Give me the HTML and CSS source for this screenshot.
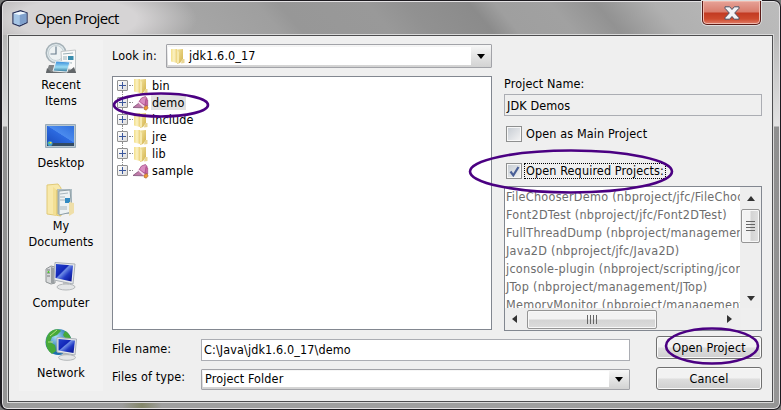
FILE: index.html
```html
<!DOCTYPE html>
<html lang="en">
<head>
<meta charset="utf-8">
<title>Open Project</title>
<link rel="stylesheet" href="styles.css">
</head>
<body>
<svg class="defs" width="0" height="0" aria-hidden="true">
  <defs>
    <linearGradient id="fold" x1="0" x2="1" y1="0" y2="0"><stop offset="0" stop-color="#f3df8a"/><stop offset=".5" stop-color="#fbf2c4"/><stop offset="1" stop-color="#ecd27a"/></linearGradient>
    <linearGradient id="flap" x1="0" x2="1" y1="0" y2="1"><stop offset="0" stop-color="#f4e5a0"/><stop offset="1" stop-color="#d2b14a"/></linearGradient>
    <linearGradient id="scr" x1="0" x2="1" y1="0" y2="1"><stop offset="0" stop-color="#2544cd"/><stop offset=".4" stop-color="#1226b8"/><stop offset=".45" stop-color="#6f8de6"/><stop offset=".65" stop-color="#2038c4"/><stop offset="1" stop-color="#060d86"/></linearGradient>
    <linearGradient id="desk" x1="0" x2="1" y1="1" y2="0"><stop offset="0" stop-color="#1c4fc0"/><stop offset=".5" stop-color="#2c6ae0"/><stop offset=".52" stop-color="#4b8bee"/><stop offset="1" stop-color="#2f6fdd"/></linearGradient>
    <radialGradient id="globe" cx=".4" cy=".3"><stop offset="0" stop-color="#a8ddf7"/><stop offset="1" stop-color="#1e6fae"/></radialGradient>
    <linearGradient id="pic" x1="0" x2="0" y1="0" y2="1"><stop offset="0" stop-color="#2f86d8"/><stop offset=".55" stop-color="#9bdcf4"/><stop offset="1" stop-color="#2b7396"/></linearGradient>
    <symbol id="folder" viewBox="0 0 16 16"><path d="M1 1h6v14l-6-1.500z" fill="url(#fold)"/><path d="M7 1.500 13 1v10l-3 4-3 1z" fill="url(#flap)"/><path d="M7 2v13.500l2-1V4z" fill="#f6e9ae"/><path d="M12 11h2.500v4L11 15.500z" fill="#e9d693"/></symbol>
    <symbol id="project" viewBox="0 0 16 16"><path d="M0 12.500 6 8l5 4-1 .8z" fill="#c07aa8" stroke="#805078" stroke-width=".8"/><path d="M5.500 7.500 8.500 3l4-1.500 1.500 2-1 7z" fill="#d98cc0" stroke="#a25186" stroke-width=".8"/><path d="M13 3.500 14.700 5v6L12 10z" fill="#c765a0" stroke="#9c3f78" stroke-width=".6"/><path d="m5 6.500 8 7" stroke="#f8dcee" stroke-width="1.800"/><path d="m6 6 8 6.500" stroke="#b0568f" stroke-width=".8"/><path d="m11 12 3-1.500 1.200 2.500-2 2.200-2.200-1z" fill="#f09a35" stroke="#9f6334" stroke-width=".6"/></symbol>
  </defs>
</svg>
<div class="window">
  <header class="titlebar">
    <svg class="app-icon" width="16" height="17" viewBox="0 0 16 17"><path d="M1 3 8.500.8 15 3v9.500L7.500 16 1 13.500z" fill="#bcd3ea" stroke="#27315b" stroke-width="1.300"/><path d="m1.500 3.500 6 1.500 7-2-6-1.500z" fill="#eff7ff"/><path d="M7.500 5 14.500 3.200v9L7.500 15.300z" fill="#7fa0cc"/><path d="M1.700 4 7.200 5.200v10L1.700 13z" fill="#a5c5e6"/></svg>
    <h1 class="title">Open Project</h1>
    <button class="close" aria-label="Close"><svg width="16" height="14" viewBox="0 0 16 14"><path d="M1 .8h4.700L8 3.500 10.300.8H15v1.500L10.700 7l4.300 4.700v1.500h-4.700L8 10.500l-2.300 2.700H1v-1.500L5.300 7 1 2.300z" fill="#f3f3f5" stroke="#4c5264"/></svg></button>
  </header>
  <main class="content">
    <nav class="places">
      <a class="place recent"><svg width="32" height="32" viewBox="0 0 32 32"><path d="m1 31 3-8h25l2 8z" fill="#818486"/><circle cx="11" cy="11" r="9.800" fill="#dfe8ec" stroke="#a5b1b7" stroke-width="1.500"/><circle cx="11" cy="11" r="7.500" fill="#edf2f3" stroke="#c6d1d5"/><path d="M11 4.500V12H5.500" stroke="#697d8e" stroke-width="1.200" fill="none"/><path d="M16 9.500 30.500 8v20L17 26z" fill="#fafafa" stroke="#c2c6c8"/><path d="m18 12 10-1M18 15h4M18 17h4M18 20l9 1" stroke="#9ab0b7"/><path d="M23 14h5.500v4H23z" fill="#398dae"/><path d="m11 19 14 1-3 10-14-1z" fill="url(#pic)" stroke="#e8eef1"/><path d="m1 31 1-5 4 4 16 1 7-6 2 6z" fill="#626669"/></svg><span>Recent<br>Items</span></a>
      <a class="place desktop"><svg width="32" height="24" viewBox="0 0 32 24"><path d="M.5.500h30v23H.5z" fill="#b8c8d1" stroke="#9aabb8"/><path d="M2 2h27v17H2z" fill="url(#desk)"/><path d="M2 19h27v3H2z" fill="#324a63"/><circle cx="5" cy="19.500" r="2.500" fill="#3fa3d4"/><path d="M5 18h1.500v1.500H5z" fill="#ffdc3b"/><path d="M3.500 18H5v1.500H3.500z" fill="#8ace3d"/></svg><span>Desktop</span></a>
      <a class="place documents"><svg width="32" height="34" viewBox="0 0 32 34"><path d="M2 2 13 1l3 4v28L2 31z" fill="#f8e9ab" stroke="#e1ca78"/><path d="M12 6h15v25H12z" fill="#aebdc4"/><path d="m14 8 11-1 2 22-13 3z" fill="#edf2f3" stroke="#8fa0a7"/><path d="m15 11 8-1M15 14h5M15 17h5M15 24h7M15 26h7" stroke="#a7b6bd"/><path d="M20 15h5v5h-5z" fill="#328bc2"/><path d="m8 4 4 3v26l-4-2z" fill="#f3df93"/><path d="m12 7 0 25" stroke="#d7bd63"/><path d="m24 19 5 1v10l-5 3z" fill="#efdfa9"/></svg><span>My<br>Documents</span></a>
      <a class="place computer"><svg width="32" height="30" viewBox="0 0 32 30"><path d="m1 8 5-3 4 1v16l-4 1-5-2z" fill="#d8dadb" stroke="#8f9496"/><path d="m6 6 3 1v15H6z" fill="#9a9fa2"/><path d="M2 9h3M2 12h3M2 15h3" stroke="#74787a"/><circle cx="3.500" cy="11" r="1" fill="#48ca24"/><path d="m18 21 6 1v5h-6z" fill="#bfc1c2"/><ellipse cx="21" cy="26" rx="9" ry="3" fill="#e4e6e7" stroke="#b5b8ba"/><path d="M10 1.500 30 3l-2 20-19-4z" fill="#e8eaec" stroke="#aab0b6"/><path d="M11 3 28 4.500 26.500 20.500 10.500 17z" fill="url(#scr)"/></svg><span>Computer</span></a>
      <a class="place network"><svg width="32" height="33" viewBox="0 0 32 33"><circle cx="13.500" cy="14" r="13" fill="url(#globe)"/><path d="M4 5c5-5 11-4 12-2l-4 4-5 2-2 5 5 3 1 6-4 3C0 21-1 12 4 5zM20 3c4 2 6 6 6 9l-5-1-3-4z" fill="#47a93a"/><path d="M5 8 12 2M3 14h5" stroke="#b4e37a"/><path d="M18 24h6v5h-6z" fill="#bbb"/><ellipse cx="22" cy="29.500" rx="8.500" ry="2.800" fill="#e5e6e7" stroke="#b3b6b8"/><path d="M12 9.500 31.500 11 30 27l-18-3z" fill="#e8eaec" stroke="#aab0b6"/><path d="M13.500 11 30 12.500 28.500 25l-15-2.500z" fill="url(#scr)"/></svg><span>Network</span></a>
    </nav>
    <div class="chooser">
      <div class="upper">
        <section class="browse">
          <div class="lookin"><label>Look in:</label><div class="combo"><div class="value"><svg width="16" height="16"><use href="#folder"/></svg><span>jdk1.6.0_17</span></div><i class="drop"></i></div></div>
          <ul class="tree">
            <li><i class="plus"></i><svg width="16" height="16"><use href="#folder"/></svg><span>bin</span></li>
            <li><i class="plus"></i><svg width="16" height="16"><use href="#project"/></svg><span class="selected">demo</span></li>
            <li><i class="plus"></i><svg width="16" height="16"><use href="#folder"/></svg><span>include</span></li>
            <li><i class="plus"></i><svg width="16" height="16"><use href="#folder"/></svg><span>jre</span></li>
            <li><i class="plus"></i><svg width="16" height="16"><use href="#folder"/></svg><span>lib</span></li>
            <li><i class="plus"></i><svg width="16" height="16"><use href="#project"/></svg><span>sample</span></li>
          </ul>
        </section>
        <section class="details">
          <label class="name-label">Project Name:</label>
          <div class="field readonly">JDK Demos</div>
          <div class="check main-check"><i class="box"></i><span>Open as Main Project</span></div>
          <div class="check"><i class="box"><svg width="11" height="11" viewBox="0 0 11 11"><path d="m1.500 5.500 2.800 3.800L9.500 1" fill="none" stroke="#4a5f97" stroke-width="2.200"/></svg></i><span class="focused">Open Required Projects:</span></div>
          <div class="listbox">
            <ul class="projects">
              <li>FileChooserDemo (nbproject/jfc/FileChooserDemo)</li>
              <li>Font2DTest (nbproject/jfc/Font2DTest)</li>
              <li>FullThreadDump (nbproject/management/FullThreadDump)</li>
              <li>Java2D (nbproject/jfc/Java2D)</li>
              <li>jconsole-plugin (nbproject/scripting/jconsole-plugin)</li>
              <li>JTop (nbproject/management/JTop)</li>
              <li>MemoryMonitor (nbproject/management/MemoryMonitor)</li>
            </ul>
            <div class="vscroll"><i class="up"></i><div class="thumb"><i></i><i></i><i></i><i></i></div><i class="down"></i></div>
            <div class="hscroll"><i class="left"></i><div class="thumb"><i></i><i></i><i></i><i></i></div><i class="right"></i></div>
          </div>
        </section>
      </div>
      <div class="lower">
        <div class="form">
          <div class="row file"><label>File name:</label><div class="field">C:\Java\jdk1.6.0_17\demo</div></div>
          <div class="row type"><label>Files of type:</label><div class="combo"><div class="value">Project Folder</div><i class="drop"></i></div></div>
        </div>
        <div class="actions"><button>Open Project</button><button>Cancel</button></div>
      </div>
    </div>
  </main>
</div>
<svg class="marks" width="781" height="410" viewBox="0 0 781 410" aria-hidden="true">
  <ellipse cx="161" cy="105" rx="47" ry="11.500"/>
  <ellipse cx="571" cy="171.500" rx="101" ry="21"/>
  <ellipse cx="712" cy="346" rx="46" ry="17.500"/>
</svg>
</body>
</html>
```
FILE: styles.css
```css
* { box-sizing: border-box; }
body {
  margin: 0;
  width: 781px;
  height: 410px;
  overflow: hidden;
  background: #777;
  color: #000;
  font: 12.5px/16px "DejaVu Sans Condensed", "DejaVu Sans", sans-serif;
  letter-spacing: .12px;
}
.defs, .marks { position: absolute; }
.marks { left: 0; top: 0; fill: none; stroke: #4b0082; stroke-width: 2.6; pointer-events: none; }
ul { list-style: none; margin: 0; padding: 0; }
svg { display: block; flex: none; }
i { flex: none; }

/* window frame */
.window {
  width: 781px;
  height: 410px;
  padding: 0 6px;
  border: 1px solid #1d1b20;
  border-left-width: 2px;
  border-radius: 7px;
  box-shadow: inset 0 0 0 1px #e4e2e4;
  background:
    linear-gradient(#b5b5b5, #dadada 91px, #919191 92px, #969696) 0 34px / 8px 100% no-repeat,
    linear-gradient(#b9b9b9, #e3e3e3 91px, #8f8f8f 92px, #969696) 100% 34px / 8px 100% no-repeat,
    linear-gradient(90deg, #9c9c9c 0 120px, #84876a 140px, #9f9f9f 160px 540px, #969696) 0 100% / 100% 8px no-repeat,
    radial-gradient(ellipse 120px 40px at 75px 18px, #d6d4d5 0 50%, #d4d2d300) 0 0 / 100% 34px no-repeat,
    linear-gradient(50deg, #aaa6a7 0, #a6a6a6 150px, #9f9f9f 215px, #979797 232px, #999 300px, #919191 330px, #8b8b8b 378px, #9f9f9f 398px, #a1a1a1 440px, #929292 475px, #969696 482px, #b0b0b0 520px, #bcbcbc) 0 0 / 100% 34px no-repeat,
    #999;
}
.titlebar { display: flex; height: 33px; padding-left: 4px; }
.app-icon { margin: 9px 7px 0 0; }
.title { flex: 1; margin: 7px 0 0 0; font: 400 15px/21px "Open Sans", sans-serif; letter-spacing: -.62px; }
.close {
  display: grid;
  place-items: center;
  width: 59px;
  height: 24px;
  margin-right: 13px;
  padding: 0;
  border: 1px solid #5b1b17;
  border-top: 0;
  border-radius: 0 0 5px 5px;
  background: linear-gradient(#e6a398, #d97c6c 11px, #c23a22 12px, #ce4a2d 18px, #e1806b);
  box-shadow: inset 0 0 0 1px #f0b9ad, 0 0 0 1px #dedede;
}
.content {
  display: flex;
  gap: 9px;
  width: 765px;
  height: 367px;
  margin-top: 1px;
  padding: 4px 0 0 10px;
  border: 1px solid #4d4d4f;
  box-shadow: 0 0 0 1px #dadada;
  background: #efefef;
}

/* places bar */
.places { display: flex; flex-direction: column; width: 84px; height: 351px; background: #f2f2f2; }
.place { display: flex; flex-direction: column; align-items: center; text-align: center; }
.recent { padding-top: 2px; }
.recent span { margin-top: 3px; }
.desktop { margin-top: 15px; }
.desktop span { margin-top: 7px; }
.documents { margin-top: 12px; }
.documents span { margin-top: 1px; }
.computer { margin-top: 11px; }
.computer span { margin-top: 4px; }
.network { margin-top: 17px; }
.network span { margin-top: 4px; }

/* main area */
.chooser { width: 650px; }
.upper { display: flex; gap: 12px; height: 290px; }
.browse { width: 380px; padding-top: 4px; }
.lookin { display: flex; align-items: center; }
.lookin label { width: 54px; }
.lookin .combo { width: 326px; height: 24px; }
.combo {
  display: flex;
  padding: 2px 1px 1px;
  border: 1px solid #a2a3a8;
  border-radius: 1px;
  background: linear-gradient(#f7f7f7, #d2d2d2);
}
.combo .value { display: flex; flex: 1; align-items: center; gap: 3px; margin-bottom: 1px; background: #fff; }
.lookin .value { padding-left: 2px; }
.drop { display: grid; place-items: center; width: 19px; }
.drop::before { content: ""; border: 4.500px solid #0000; border-top: 5px solid #000; border-bottom: 0; }
.tree { height: 254px; margin-top: 8px; padding-left: 4px; border: 1px solid #828790; background: #fff; }
.tree li { display: flex; align-items: center; height: 17px; }
.plus {
  position: relative;
  width: 11px;
  height: 11px;
  border: 1px solid #929292;
  border-radius: 1px;
  background:
    linear-gradient(#3b579d, #3b579d) center / 7px 1px no-repeat,
    linear-gradient(#3b579d, #3b579d) center / 1px 7px no-repeat,
    linear-gradient(135deg, #fff, #dcdcdc);
}
.plus::before { content: ""; position: absolute; left: 11px; top: 4px; width: 4px; border-top: 1px dotted #8b8b8b; }
.plus::after { content: ""; position: absolute; left: 4px; top: 10px; height: 6px; border-left: 1px dotted #8b8b8b; }
.tree li:last-child .plus::after { display: none; }
.tree svg { margin-left: 5px; }
.tree span { margin-left: 2px; padding: 0 2px 0 1px; line-height: 15px; }
.tree .selected { background: #e1e1e1; }

.details { width: 258px; padding-top: 36px; }
.name-label { display: block; margin-bottom: 2px; }
.field { height: 22px; padding: 2px 2px; border: 1px solid #abadb3; background: #fff; white-space: nowrap; }
.readonly { background: #efefef; padding-top: 3px; }
.check { display: flex; align-items: center; height: 16px; padding-left: 2px; margin-bottom: 7px; }
.main-check { margin: 10px 0 21px; }
.box { display: grid; place-items: center; width: 16px; height: 16px; border: 1px solid #8e8f8f; box-shadow: inset 0 0 0 1px #f7f7f7; background: linear-gradient(135deg, #c5cbd2, #f5f5f5); }
.check span { margin-left: 3px; padding: 0 1px; line-height: 14px; white-space: nowrap; }
.check .focused { outline: 1px dotted #000; }
.listbox {
  display: grid;
  grid-template: 121px 1fr / 235px 1fr;
  width: 258px;
  height: 145px;
  border: 1px solid #828790;
  background: #efefef;
}
.projects { overflow: hidden; padding: 1px 0 0 1px; background: #fff; color: #6d6d6d; line-height: 18px; letter-spacing: .27px; white-space: nowrap; }
.vscroll { display: flex; flex-direction: column; align-items: center; background: #eee; }
.hscroll { display: flex; align-items: center; width: 236px; background: #eee; }
.up { margin-top: 9px; border: 4.500px solid #0000; border-bottom: 5px solid #333; border-top: 0; }
.down { margin-top: 53px; border: 4.500px solid #0000; border-top: 5px solid #333; border-bottom: 0; }
.left { margin-left: 7px; border: 4.500px solid #0000; border-right: 5px solid #333; border-left: 0; }
.right { margin-left: 70px; border: 4.500px solid #0000; border-left: 5px solid #333; border-right: 0; }
.thumb { display: flex; align-items: center; justify-content: center; gap: 2px; border: 1px solid #959595; border-radius: 2px; box-shadow: inset 0 0 0 1px #f8f8f8; }
.vscroll .thumb { flex-direction: column; width: 19px; height: 34px; margin-top: 8px; background: linear-gradient(90deg, #f3f3f3 45%, #d4d4d4 55%, #e0e0e0); }
.vscroll .thumb i { width: 9px; height: 1px; background: #666; }
.hscroll .thumb { width: 130px; height: 19px; margin-left: 10px; background: linear-gradient(#f3f3f3 45%, #d4d4d4 55%, #dcdcdc); }
.hscroll .thumb i { width: 1px; height: 9px; background: #666; }

.lower { display: flex; justify-content: space-between; padding-top: 6px; }
.row { display: flex; }
.row label { width: 89px; }
.row .field, .row .combo { width: 429px; }
.file { padding-top: 3px; }
.file label { padding-top: 2px; }
.type { margin-top: 8px; }
.type .combo { height: 21px; padding-top: 1px; }
.type .combo .value { padding-left: 2px; }
.actions { display: flex; flex-direction: column; gap: 8px; width: 106px; }
.actions button {
  height: 23px;
  padding: 0;
  border: 1px solid #707070;
  border-radius: 3px;
  box-shadow: inset 0 0 0 1px #fafafa;
  background: linear-gradient(#f2f2f2 45%, #dddddd 55%, #cfcfcf);
  color: #000;
  font: inherit;
  letter-spacing: inherit;
}
```
